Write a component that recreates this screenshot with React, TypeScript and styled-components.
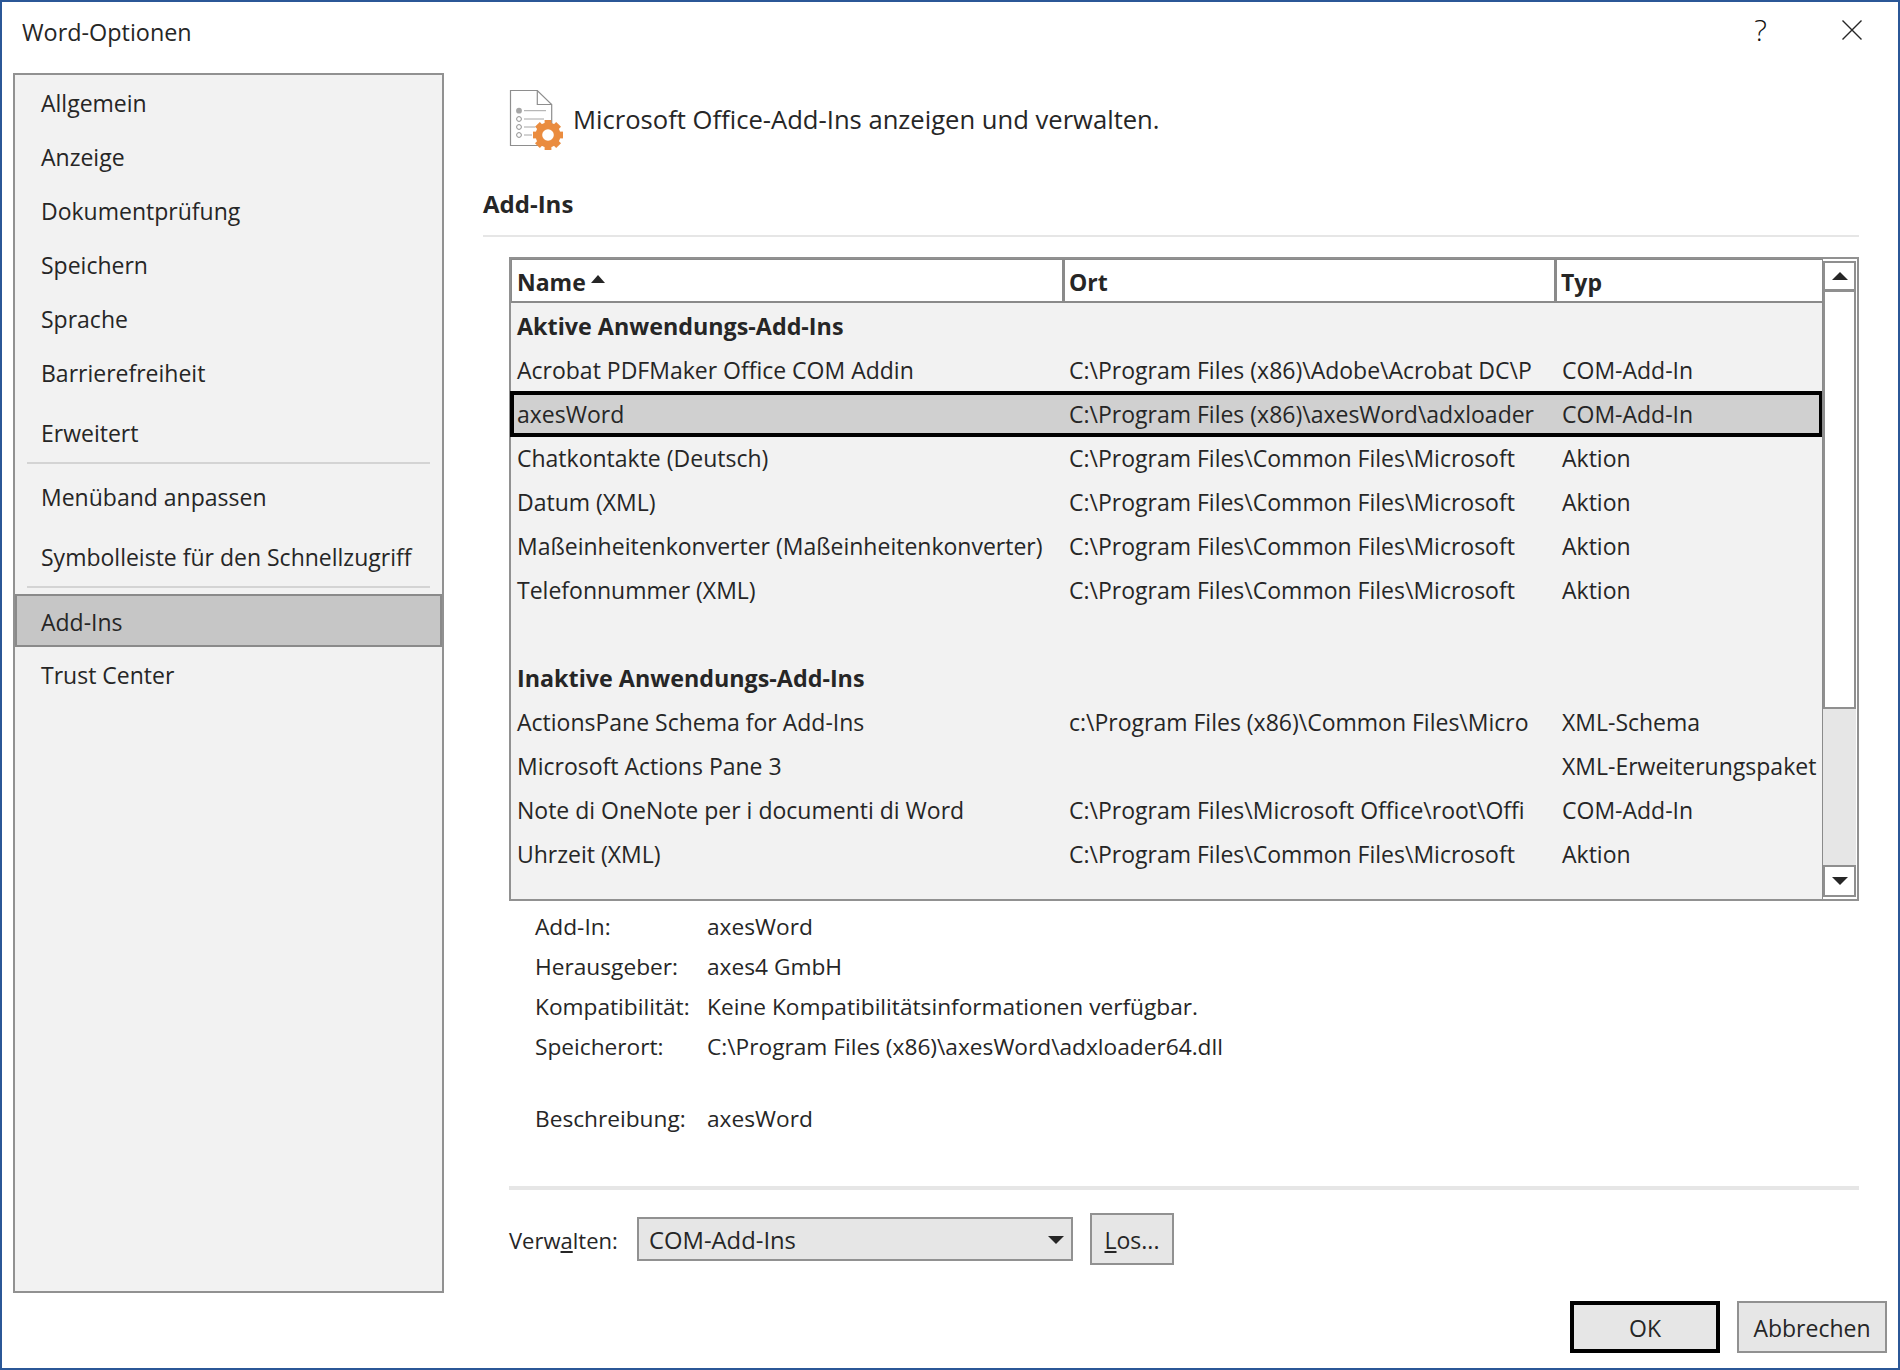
import React from 'react';
import styled, { createGlobalStyle } from 'styled-components';

const GlobalStyle = createGlobalStyle`
  html, body {
    margin: 0;
    padding: 0;
    background: #fff;
  }
  #root {
    width: 1900px;
    height: 1370px;
  }
`;

const Dialog = styled.div`
  box-sizing: border-box;
  width: 1900px;
  height: 1370px;
  border: 2px solid #2b5797;
  background: #fff;
  display: flex;
  flex-direction: column;
  overflow: hidden;
  font-family: 'Open Sans', 'Liberation Sans', sans-serif;
  font-size: 23px;
  color: #262626;
`;

const TitleBar = styled.div`
  height: 71px;
  flex: none;
  display: flex;
  align-items: flex-start;
  padding: 0 36px 0 20px;
`;

const Title = styled.div`
  flex: 1;
  margin-top: 14px;
  line-height: 32px;
  font-size: 23.4px;
`;

const HelpMark = styled.div`
  margin: 9px 75px 0 0;
  font-size: 30px;
  font-weight: 300;
  line-height: 38px;
  color: #111;
`;

const CloseIcon = styled.svg`
  margin-top: 18px;
  width: 20px;
  height: 20px;
`;

const Main = styled.div`
  flex: none;
  height: 1220px;
  display: flex;
  padding-left: 11px;
`;

const Sidebar = styled.nav`
  box-sizing: border-box;
  width: 431px;
  flex: none;
  padding-top: 1px;
  border: 2px solid #919191;
  background: #f2f2f2;
`;

const NavItem = styled.div<{ $gap?: number; $active?: boolean }>`
  box-sizing: border-box;
  height: ${p => (p.$active ? '53px' : '54px')};
  margin-top: ${p => p.$gap ?? 0}px;
  padding-left: ${p => (p.$active ? '24px' : '26px')};
  padding-top: ${p => (p.$active ? '2px' : '0')};
  display: flex;
  align-items: center;
  white-space: nowrap;
  ${p => p.$active && 'background: #c6c6c6; border: 2px solid #8a8a8a;'}
`;

const NavSeparator = styled.div`
  height: 2px;
  margin: 2px 12px 0;
  background: #d4d4d4;
`;

const Content = styled.div`
  flex: 1;
  min-width: 0;
  padding: 17px 39px 0 39px;
  display: flex;
  flex-direction: column;
`;

const PageHeader = styled.div`
  display: flex;
  align-items: center;
  height: 60px;
  padding-left: 22px;
`;

const PageIcon = styled.svg`
  width: 60px;
  height: 70px;
  flex: none;
  margin: 0 8px 0 0;
`;

const PageHeading = styled.div`
  margin-top: -2px;
  font-size: 25.6px;
  white-space: nowrap;
`;

const SectionTitle = styled.div`
  margin-top: 37px;
  height: 34px;
  line-height: 34px;
  font-size: 24px;
  font-weight: 700;
`;

const SectionRule = styled.div`
  height: 2px;
  margin-top: 14px;
  background: #e6e6e6;
`;

const ListFrame = styled.div`
  box-sizing: border-box;
  margin: 20px 0 0 26px;
  height: 644px;
  border: 2px solid #919191;
  display: flex;
  background: #f2f2f2;
`;

const ListBody = styled.div`
  flex: 1;
  min-width: 0;
`;

const HeaderRow = styled.div`
  box-sizing: border-box;
  height: 44px;
  padding-top: 3px;
  display: grid;
  grid-template-columns: 550px 492px 1fr;
  background: #fff;
  border-top: 1px solid #8a8a8a;
  border-left: 1px solid #8a8a8a;
  border-bottom: 2px solid #8a8a8a;
`;

const HeaderCell = styled.div<{ $first?: boolean }>`
  display: flex;
  align-items: center;
  gap: 5px;
  margin-top: ${p => (p.$first ? '0' : '-3px')};
  padding-top: ${p => (p.$first ? '0' : '3px')};
  padding-left: ${p => (p.$first ? '5px' : '4px')};
  font-weight: 700;
  ${p => !p.$first && 'border-left: 3px solid #8a8a8a;'}
`;

const SortArrow = styled.span`
  width: 0;
  height: 0;
  margin-top: -6px;
  border-left: 7.5px solid transparent;
  border-right: 7.5px solid transparent;
  border-bottom: 8px solid #262626;
`;

const Rows = styled.div`
  padding-top: 1px;
`;

const Row = styled.div<{ $selected?: boolean }>`
  box-sizing: border-box;
  height: 44px;
  display: grid;
  grid-template-columns: 552px 493px 1fr;
  align-items: center;
  ${p => p.$selected && 'background: #d0d0d0; outline: 4px solid #000; outline-offset: -3px;'}
`;

const Cell = styled.div`
  padding-left: 6px;
  white-space: nowrap;
  overflow: hidden;
`;

const GroupTitle = styled.div`
  height: 44px;
  padding-left: 6px;
  display: flex;
  align-items: center;
  font-size: 23.3px;
  font-weight: 700;
`;

const BlankRow = styled.div`
  height: 44px;
`;

const Scrollbar = styled.div`
  box-sizing: border-box;
  width: 35px;
  flex: none;
  display: flex;
  flex-direction: column;
  padding: 2px 1px 2px 0;
  background: #fff;
  border-left: 1px solid #8a8a8a;
`;

const ScrollButton = styled.div<{ $down?: boolean }>`
  box-sizing: border-box;
  height: ${p => (p.$down ? '32px' : '31px')};
  flex: none;
  display: flex;
  align-items: center;
  justify-content: center;
  background: #fff;
  border: 2px solid #8f8f8f;
  ${p => !p.$down && 'border-bottom-width: 3px;'}
`;

const Triangle = styled.span<{ $down?: boolean }>`
  width: 0;
  height: 0;
  border-left: 8px solid transparent;
  border-right: 8px solid transparent;
  ${p => (p.$down ? 'border-top: 8px solid #262626;' : 'border-bottom: 8px solid #262626;')}
`;

const ScrollThumb = styled.div`
  box-sizing: border-box;
  height: 417px;
  flex: none;
  background: #fff;
  border: 2px solid #8f8f8f;
  border-top: 0;
`;

const ScrollTrack = styled.div`
  flex: 1;
  background: #e6e6e6;
`;

const Details = styled.div`
  margin-top: 5px;
  padding-left: 52px;
  display: grid;
  grid-template-columns: 172px 1fr;
  grid-template-rows: repeat(4, 40px) 32px 40px;
  align-items: center;
  font-size: 22.7px;
`;

const DetailGap = styled.div`
  grid-column: 1 / -1;
`;

const ManageRule = styled.div`
  height: 4px;
  margin: 48px 0 0 26px;
  background: #e6e6e6;
`;

const ManageRow = styled.div`
  height: 52px;
  margin: 23px 0 0 26px;
  display: flex;
  align-items: center;
`;

const ManageLabel = styled.div`
  width: 128px;
  flex: none;
  padding-top: 1px;
  font-size: 22px;
`;

const SelectBox = styled.div`
  box-sizing: border-box;
  width: 436px;
  height: 44px;
  padding: 1px 7px 0 10px;
  display: flex;
  align-items: center;
  justify-content: space-between;
  font-size: 23.8px;
  background: #e6e6e6;
  border: 2px solid #919191;
`;

const Button = styled.div<{ $width: number; $primary?: boolean }>`
  box-sizing: border-box;
  width: ${p => p.$width}px;
  height: 52px;
  flex: none;
  padding-top: 2px;
  display: flex;
  align-items: center;
  justify-content: center;
  background: #e6e6e6;
  border: ${p => (p.$primary ? '4px solid #000' : '2px solid #919191')};
`;

const GoButton = styled(Button)`
  margin-left: 17px;
`;

const Footer = styled.div`
  display: flex;
  justify-content: flex-end;
  gap: 17px;
  padding: 8px 11px 0 0;
`;

const navTop = ['Allgemein', 'Anzeige', 'Dokumentprüfung', 'Speichern', 'Sprache', 'Barrierefreiheit'];

const activeAddIns = [
  ['Acrobat PDFMaker Office COM Addin', 'C:\\Program Files (x86)\\Adobe\\Acrobat DC\\P', 'COM-Add-In'],
  ['axesWord', 'C:\\Program Files (x86)\\axesWord\\adxloader', 'COM-Add-In'],
  ['Chatkontakte (Deutsch)', 'C:\\Program Files\\Common Files\\Microsoft', 'Aktion'],
  ['Datum (XML)', 'C:\\Program Files\\Common Files\\Microsoft', 'Aktion'],
  ['Maßeinheitenkonverter (Maßeinheitenkonverter)', 'C:\\Program Files\\Common Files\\Microsoft', 'Aktion'],
  ['Telefonnummer (XML)', 'C:\\Program Files\\Common Files\\Microsoft', 'Aktion'],
];

const inactiveAddIns = [
  ['ActionsPane Schema for Add-Ins', 'c:\\Program Files (x86)\\Common Files\\Micro', 'XML-Schema'],
  ['Microsoft Actions Pane 3', '', 'XML-Erweiterungspaket'],
  ['Note di OneNote per i documenti di Word', 'C:\\Program Files\\Microsoft Office\\root\\Offi', 'COM-Add-In'],
  ['Uhrzeit (XML)', 'C:\\Program Files\\Common Files\\Microsoft', 'Aktion'],
];

const details = [
  ['Add-In:', 'axesWord'],
  ['Herausgeber:', 'axes4 GmbH'],
  ['Kompatibilität:', 'Keine Kompatibilitätsinformationen verfügbar.'],
  ['Speicherort:', 'C:\\Program Files (x86)\\axesWord\\adxloader64.dll'],
];

const GEAR_TEETH = [0, 45, 90, 135, 180, 225, 270, 315];

const AddInIcon = () => (
  <PageIcon viewBox="0 0 60 70">
    <path d="M5.5 5.5H32.3L46.7 19.5V60.5H5.5Z" fill="#fff" stroke="#8e8e8e" strokeWidth="1.2" />
    <path d="M32.3 5.5V19.5H46.7" fill="none" stroke="#8e8e8e" strokeWidth="1.2" />
    <circle cx="14" cy="25.7" r="2.9" fill="#a6a6a6" />
    <circle cx="14" cy="34" r="2.4" fill="none" stroke="#8e8e8e" strokeWidth="1" />
    <circle cx="14" cy="42" r="2.4" fill="none" stroke="#8e8e8e" strokeWidth="1" />
    <circle cx="14" cy="50" r="2.4" fill="none" stroke="#8e8e8e" strokeWidth="1" />
    <path d="M19 25.7H41M19 34H39M19 42H30M19 50H27" stroke="#a6a6a6" strokeWidth="1" />
    <circle cx="43" cy="50" r="12.5" fill="#ea8c3f" />
    {GEAR_TEETH.map(a => (
      <rect key={a} x="39.6" y="35" width="6.8" height="7" fill="#ea8c3f" transform={`rotate(${a} 43 50)`} />
    ))}
    <circle cx="43" cy="50" r="5.8" fill="#fff" />
  </PageIcon>
);

const AddInRow: React.FC<{ row: string[]; selected?: boolean }> = ({ row, selected }) => (
  <Row $selected={selected}>
    {row.map((text, i) => (
      <Cell key={i}>{text}</Cell>
    ))}
  </Row>
);

export default function App() {
  return (
    <>
      <GlobalStyle />
      <Dialog>
        <TitleBar>
          <Title>Word-Optionen</Title>
          <HelpMark>?</HelpMark>
          <CloseIcon viewBox="0 0 20 20">
            <path d="M0.5 0.5L19.5 19.5M19.5 0.5L0.5 19.5" stroke="#262626" strokeWidth="1.4" fill="none" />
          </CloseIcon>
        </TitleBar>
        <Main>
          <Sidebar>
            {navTop.map(item => (
              <NavItem key={item}>{item}</NavItem>
            ))}
            <NavItem $gap={6}>Erweitert</NavItem>
            <NavSeparator />
            <NavItem $gap={6}>Menüband anpassen</NavItem>
            <NavItem $gap={6}>Symbolleiste für den Schnellzugriff</NavItem>
            <NavSeparator />
            <NavItem $gap={6} $active>
              Add-Ins
            </NavItem>
            <NavItem $gap={1}>Trust Center</NavItem>
          </Sidebar>
          <Content>
            <PageHeader>
              <AddInIcon />
              <PageHeading>Microsoft Office-Add-Ins anzeigen und verwalten.</PageHeading>
            </PageHeader>
            <SectionTitle>Add-Ins</SectionTitle>
            <SectionRule />
            <ListFrame>
              <ListBody>
                <HeaderRow>
                  <HeaderCell $first>
                    Name
                    <SortArrow />
                  </HeaderCell>
                  <HeaderCell>Ort</HeaderCell>
                  <HeaderCell>Typ</HeaderCell>
                </HeaderRow>
                <Rows>
                  <GroupTitle>Aktive Anwendungs-Add-Ins</GroupTitle>
                  {activeAddIns.map(row => (
                    <AddInRow key={row[0]} row={row} selected={row[0] === 'axesWord'} />
                  ))}
                  <BlankRow />
                  <GroupTitle>Inaktive Anwendungs-Add-Ins</GroupTitle>
                  {inactiveAddIns.map(row => (
                    <AddInRow key={row[0]} row={row} />
                  ))}
                </Rows>
              </ListBody>
              <Scrollbar>
                <ScrollButton>
                  <Triangle />
                </ScrollButton>
                <ScrollThumb />
                <ScrollTrack />
                <ScrollButton $down>
                  <Triangle $down />
                </ScrollButton>
              </Scrollbar>
            </ListFrame>
            <Details>
              {details.map(([label, value]) => (
                <React.Fragment key={label}>
                  <div>{label}</div>
                  <div>{value}</div>
                </React.Fragment>
              ))}
              <DetailGap />
              <div>Beschreibung:</div>
              <div>axesWord</div>
            </Details>
            <ManageRule />
            <ManageRow>
              <ManageLabel>
                Verw<u>a</u>lten:
              </ManageLabel>
              <SelectBox>
                COM-Add-Ins
                <Triangle $down />
              </SelectBox>
              <GoButton $width={84}>
                <span>
                  <u>L</u>os...
                </span>
              </GoButton>
            </ManageRow>
          </Content>
        </Main>
        <Footer>
          <Button $width={150} $primary>
            OK
          </Button>
          <Button $width={150}>Abbrechen</Button>
        </Footer>
      </Dialog>
    </>
  );
}
